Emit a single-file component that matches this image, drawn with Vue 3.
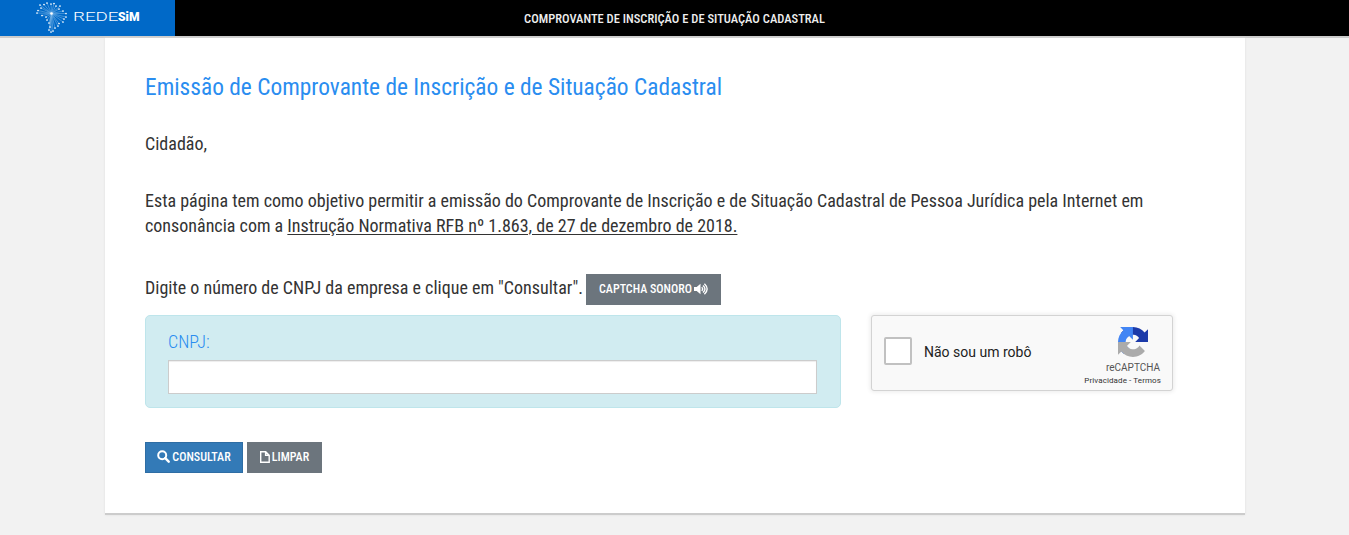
<script setup>
const rays = [[37,13],[38,10.5],[41,8],[40,5],[44,4.5],[47,3],[51,4],[54,3.5],[56,6],[60,6],[59,9],[63,11],[66,13.5],[66,17],[64,19],[63,22],[59,23.5],[58,26],[55,28],[53,31],[51,32],[49,30],[50,27],[49,23],[47,20],[46,17],[42,15.5]]
</script>

<template>
  <div class="page">
    <header class="bar">
      <div class="brand">
        <svg width="175" height="36" viewBox="0 0 175 36">
          <g stroke="#b9dcf7" stroke-width=".5" opacity=".7">
            <line v-for="(p, i) in rays" :key="'l' + i" x1="51.5" y1="13.5" :x2="p[0]" :y2="p[1]" />
          </g>
          <g fill="#fff">
            <circle v-for="(p, i) in rays" :key="'c' + i" :cx="p[0]" :cy="p[1]" r=".85" />
            <circle cx="51.5" cy="13.5" r="1.3" />
          </g>
          <text class="rede" x="73" y="21.2" textLength="45.5" lengthAdjust="spacingAndGlyphs">REDE</text>
          <text class="sim" x="118" y="21.2" textLength="21.5" lengthAdjust="spacingAndGlyphs">SiM</text>
        </svg>
      </div>
      <div class="title"><span>COMPROVANTE DE INSCRIÇÃO E DE SITUAÇÃO CADASTRAL</span></div>
    </header>

    <main class="card">
      <h1>Emissão de Comprovante de Inscrição e de Situação Cadastral</h1>
      <p class="hello">Cidadão,</p>
      <p class="info">Esta página tem como objetivo permitir a emissão do Comprovante de Inscrição e de Situação Cadastral de Pessoa Jurídica pela Internet em<br>consonância com a <a>Instrução Normativa RFB nº 1.863, de 27 de dezembro de 2018.</a></p>
      <div class="ask">
        <span>Digite o número de CNPJ da empresa e clique em "Consultar".</span>
        <button class="btn sound">CAPTCHA SONORO
          <svg width="14" height="12" viewBox="0 0 14 12" fill="none" stroke="#fff" stroke-width="1.4"><path d="M0 4h2.7L6.5.8v10.4L2.7 8H0z" fill="#fff" stroke="none" /><path d="M7.7 4.2q2 1.8 0 3.6M9 2.4q4 3.6 0 7.2M10.4.7q5.5 5.3 0 10.6" /></svg>
        </button>
      </div>
      <div class="row">
        <div class="panel">
          <label for="cnpj">CNPJ:</label>
          <input id="cnpj" type="text">
        </div>
        <div class="captcha">
          <div class="check"></div>
          <div class="robot">Não sou um robô</div>
          <div class="rc">
            <svg width="30" height="30" viewBox="0 0 64 64">
              <path fill="#1c3aa9" d="M64 31.955l-.033-1.37V4.687l-7.16 7.16C50.948 4.674 42.033.093 32.05.093c-10.4 0-19.622 4.96-25.458 12.64l11.736 11.86a15.55 15.55 0 0 1 4.754-5.334c2.05-1.6 4.952-2.906 8.968-2.906.485 0 .86.057 1.135.163 4.976.393 9.288 3.14 11.828 7.124l-8.307 8.307L64 31.953" />
              <path fill="#4285f4" d="M31.862.094l-1.37.033H4.594l7.16 7.16C4.58 13.147 0 22.06 0 32.046c0 10.4 4.96 19.622 12.64 25.458L24.5 45.768a15.55 15.55 0 0 1-5.334-4.754c-1.6-2.05-2.906-4.952-2.906-8.968 0-.485.057-.86.163-1.135.393-4.976 3.14-9.288 7.124-11.828l8.307 8.307L31.86.095" />
              <path fill="#ababab" d="M.001 32.045l.033 1.37v25.898l7.16-7.16c5.86 7.173 14.774 11.754 24.76 11.754 10.4 0 19.622-4.96 25.458-12.64l-11.736-11.86a15.55 15.55 0 0 1-4.754 5.334c-2.05 1.6-4.952 2.906-8.968 2.906-.485 0-.86-.057-1.135-.163-4.976-.393-9.288-3.14-11.828-7.124l8.307-8.307L0 32.046" />
            </svg>
            <div class="rcname">reCAPTCHA</div>
            <div class="terms">Privacidade - Termos</div>
          </div>
        </div>
      </div>
      <div class="actions">
        <button class="btn primary"><svg width="13" height="13" viewBox="0 0 13 13" fill="none" stroke="#fff"><circle cx="5.2" cy="5.2" r="4" stroke-width="2" /><path d="M8.2 8.2l3.5 3.5" stroke-width="2.4" stroke-linecap="round" /></svg> CONSULTAR</button>
        <button class="btn clear"><svg width="10" height="12" viewBox="0 0 10 12" fill="none" stroke="#fff" stroke-width="1.4"><path d="M.7.7h5l3.5 3.5v7.1H.7zM5.6.7v3.6h3.6" /></svg> LIMPAR</button>
      </div>
    </main>
  </div>
</template>

<style>
body { background: #f2f2f2; overflow: hidden; }
</style>

<style scoped>
* { box-sizing: border-box; }
.page { height: 535px; font-family: "Roboto Condensed", Roboto, sans-serif; font-stretch: 75%; font-size: 18px; color: #333; }
.bar { display: flex; height: 38px; background: #000; border-bottom: 2px solid #ccc; }
.brand { width: 175px; height: 36px; background: #0069c8; }
.brand svg { display: block; }
.rede { font: 350 12.5px Roboto, sans-serif; fill: #fff; }
.sim { font: 900 12.5px Roboto, sans-serif; fill: #fff; }
.title { width: 999px; text-align: center; color: #eee; font-size: 12.5px; font-weight: 500; line-height: 38px; }
.card { width: 1140px; height: 477px; margin-left: 105px; padding: 35px 40px 0; background: #fff; border-bottom: 2px solid #ccc; box-shadow: 0 0 2px #ddd; }
h1 { margin: 0; font-size: 23.4px; font-weight: 380; line-height: 28px; color: #2a8df0; white-space: nowrap; }
p { margin: 0; line-height: 25px; white-space: nowrap; }
p, .ask span { font-weight: 380; }
.hello { margin-top: 30px; }
.info { margin-top: 32px; }
a { text-decoration: underline; text-underline-offset: 2px; }
.ask { display: flex; align-items: center; gap: 4px; height: 31px; margin-top: 36px; white-space: nowrap; }
.ask span { width: 437px; padding-bottom: 4px; }
.btn { display: inline-flex; align-items: center; justify-content: center; gap: 2px; height: 31px; padding: 0 0 2px; border: 1px solid #6c757d; background: #6c757d; color: #fff; font: inherit; font-size: 12px; font-weight: 460; }
.sound { width: 135px; }
.row { display: flex; align-items: flex-start; gap: 30px; margin-top: 10px; }
.panel { width: 696px; height: 93px; padding: 13px 23px 0 22px; background: #d1ecf1; border: 1px solid #bee5eb; border-radius: 5px; }
label { display: block; height: 31px; line-height: 25px; font-weight: 300; color: #2a8df0; }
input { display: block; width: 649px; height: 34px; border: 1px solid #ccc; background: #fff; box-shadow: inset 0 1px 1px rgba(0,0,0,.075); }
.captcha { display: flex; width: 302px; height: 76px; padding: 0 11px 0 12px; background: #f9f9f9; border: 1px solid #d3d3d3; border-radius: 3px; box-shadow: 0 0 4px 1px rgba(0,0,0,.08); font-family: Roboto, sans-serif; font-stretch: 100%; }
.check { width: 28px; height: 28px; margin-top: 21px; border: 2px solid #c1c1c1; border-radius: 2px; background: #fff; }
.robot { margin: 28px 0 0 12px; font-size: 14px; line-height: 17px; color: #222; }
.rc { display: flex; flex-direction: column; align-items: flex-end; margin-left: auto; color: #555; white-space: nowrap; }
.rc svg { margin: 11px 13px 0 0; }
.rcname { margin: 5px 1px 0 0; font-size: 10px; line-height: 12px; }
.terms { font-size: 8px; line-height: 13px; letter-spacing: .1px; color: #333; }
.actions { display: flex; gap: 4px; margin-top: 34px; }
.primary { width: 98px; background: #337ab7; border-color: #2e6da4; }
.clear { width: 75px; }
</style>
